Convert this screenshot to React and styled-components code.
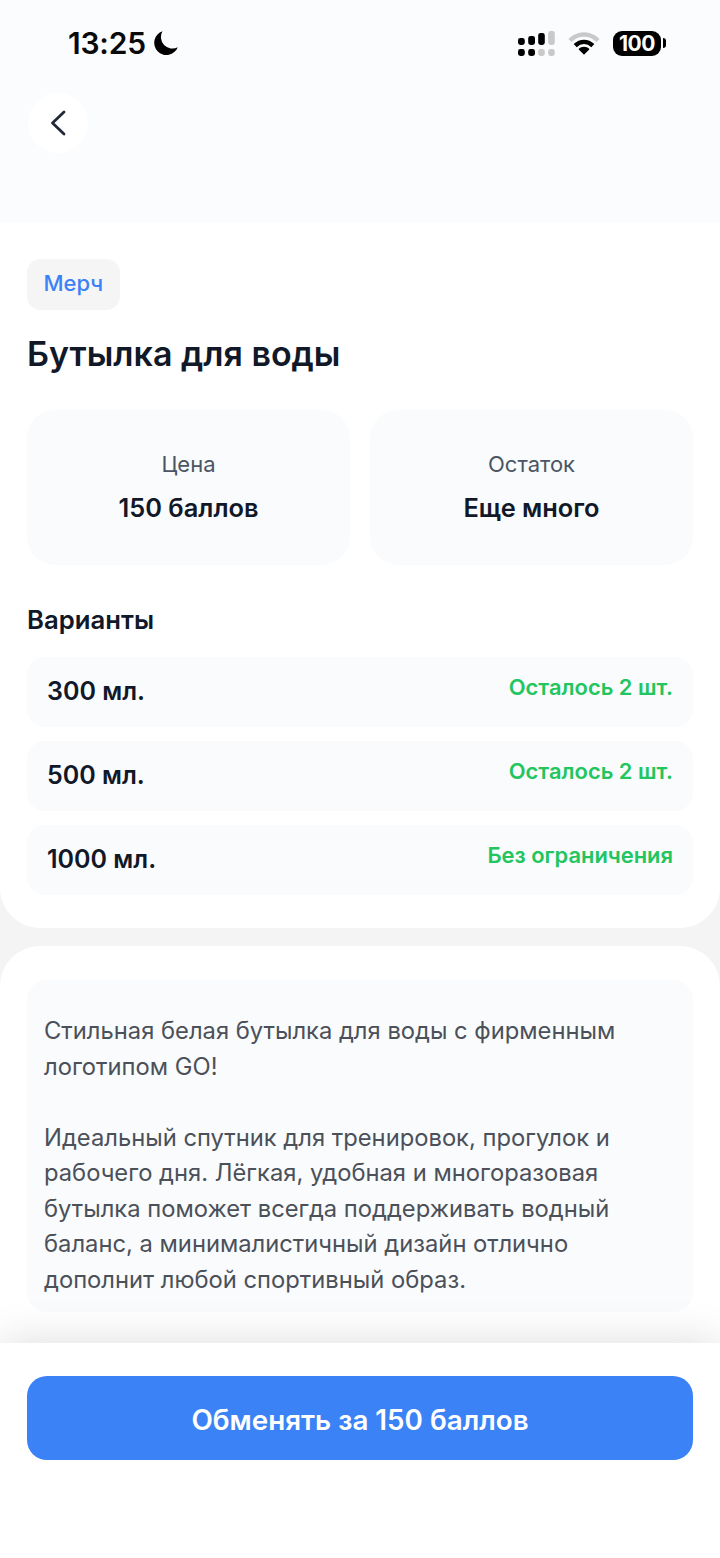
import React from "react";
import styled, { createGlobalStyle } from "styled-components";

const GlobalStyle = createGlobalStyle`
  html, body {
    margin: 0;
    padding: 0;
    background: #f4f4f5;
  }
  * {
    box-sizing: border-box;
  }
`;

const Page = styled.div`
  position: relative;
  width: 720px;
  height: 1558px;
  overflow: hidden;
  background: #f4f4f5;
  font-family: Inter, "Noto Sans", sans-serif;
  color: #111827;
`;

const Hero = styled.header`
  height: 223px;
  background: #fbfcfe;
  padding: 0 28px;
`;

const StatusBar = styled.div`
  height: 86px;
  display: flex;
  align-items: center;
  justify-content: space-between;
  padding: 0 26px 0 40px;
`;

const Clock = styled.div`
  display: flex;
  align-items: center;
  gap: 7px;
  font-size: 30px;
  font-weight: 600;
  letter-spacing: -0.2px;
  color: #0a0a0a;
`;

const StatusIcons = styled.div`
  display: flex;
  align-items: center;
  gap: 13px;
`;

const BatteryBox = styled.div`
  display: flex;
  align-items: center;
  gap: 2px;
`;

const BatteryBody = styled.div`
  width: 48px;
  height: 25px;
  border-radius: 9px;
  background: #000;
  color: #fff;
  font-size: 21px;
  font-weight: 700;
  line-height: 25px;
  text-align: center;
  letter-spacing: -0.5px;
`;

const BatteryTip = styled.div`
  width: 3px;
  height: 10px;
  border-radius: 0 3px 3px 0;
  background: #000;
`;

const BackButton = styled.button`
  width: 60px;
  height: 60px;
  margin-top: 7px;
  padding: 0;
  border: none;
  border-radius: 50%;
  background: #fff;
  display: flex;
  align-items: center;
  justify-content: center;
`;

const MainCard = styled.section`
  height: 705px;
  background: #fff;
  border-radius: 0 0 40px 40px;
  padding: 36px 27px 0;
`;

const Tag = styled.div`
  display: inline-flex;
  align-items: center;
  height: 51px;
  padding: 0 16.5px 3px;
  border-radius: 14px;
  background: #f5f5f6;
  color: #3b82f6;
  font-size: 22px;
  font-weight: 500;
`;

const Title = styled.h1`
  margin: 20px 0 0;
  font-size: 34px;
  line-height: 48px;
  font-weight: 600;
  color: #111827;
`;

const Stats = styled.div`
  display: grid;
  grid-template-columns: 1fr 1fr;
  gap: 20px;
  margin-top: 32px;
`;

const StatCard = styled.div`
  height: 155px;
  border-radius: 28px;
  background: #f9fbfd;
  display: flex;
  flex-direction: column;
  align-items: center;
  padding-top: 40px;
`;

const StatLabel = styled.div`
  font-size: 22px;
  line-height: 28px;
  color: #4b5563;
`;

const StatValue = styled.div`
  margin-top: 14px;
  font-size: 25.4px;
  line-height: 32px;
  font-weight: 570;
  color: #111827;
`;

const SectionTitle = styled.h2`
  margin: 39px 0 0;
  font-size: 25.7px;
  line-height: 32px;
  font-weight: 570;
  color: #111827;
`;

const Variants = styled.div`
  display: flex;
  flex-direction: column;
  gap: 14px;
  margin-top: 21px;
`;

const VariantRow = styled.div`
  height: 70px;
  border-radius: 18px;
  background: #f9fbfd;
  display: flex;
  justify-content: space-between;
  padding: 0 20px;
`;

const VariantName = styled.div`
  font-size: 25px;
  line-height: 68px;
  font-weight: 570;
  color: #111827;
`;

const VariantStock = styled.div`
  padding-top: 14px;
  font-size: 21.9px;
  line-height: 32px;
  font-weight: 580;
  color: #22c55e;
`;

const DescriptionCard = styled.section`
  height: 700px;
  margin-top: 18px;
  background: #fff;
  border-radius: 40px 40px 0 0;
  padding: 34px 27px 0;
`;

const DescriptionBox = styled.div`
  height: 332px;
  border-radius: 20px;
  background: #f9fbfd;
  padding: 33px 17px 0;
`;

const Paragraph = styled.p`
  margin: 0 0 35.5px;
  font-size: 23.75px;
  line-height: 35.5px;
  color: #4b5059;
`;

const Footer = styled.footer`
  position: absolute;
  left: 0;
  right: 0;
  bottom: 0;
  height: 215px;
  padding: 33px 27px 0;
  background: #fff;
  box-shadow: 0 -2px 40px rgba(0, 0, 0, 0.13);
`;

const SubmitButton = styled.button`
  width: 100%;
  height: 84px;
  border: none;
  border-radius: 20px;
  padding: 3px 0 0;
  background: #3b82f6;
  color: #fff;
  font-family: inherit;
  font-size: 27.8px;
  font-weight: 560;
`;

function MoonIcon() {
  return (
    <svg width="26" height="26" viewBox="0 0 26 26" fill="#000">
      <path d="M9.5 1.2A12.2 12.2 0 1 0 24.8 17.2 11.5 11.5 0 0 1 9.5 1.2Z" />
    </svg>
  );
}

function SignalIcon() {
  return (
    <svg width="37" height="25" viewBox="0 0 37 25">
      <rect x="0" y="7" width="6.8" height="7" rx="2.4" fill="#000" />
      <rect x="10.2" y="5" width="6.8" height="9" rx="2.4" fill="#000" />
      <rect x="20.2" y="2" width="6.6" height="12" rx="2.4" fill="#000" />
      <rect x="30.2" y="0" width="6.6" height="14" rx="2.4" fill="#c9c9c9" />
      <rect x="0" y="18" width="6.8" height="7" rx="2.4" fill="#000" />
      <rect x="10.2" y="18" width="6.8" height="7" rx="2.4" fill="#000" />
      <rect x="20.2" y="18" width="6.6" height="7" rx="2.4" fill="#c9c9c9" />
      <rect x="30.2" y="18" width="6.6" height="7" rx="2.4" fill="#c9c9c9" />
    </svg>
  );
}

function WifiIcon() {
  return (
    <svg width="32" height="24" viewBox="0 0 32 24" fill="none" strokeWidth="4.4">
      <path d="M2 9.5C10 1.5 22 1.5 30 9.5" stroke="#c9c9c9" />
      <path d="M7.2 14.6C12.5 9.6 19.5 9.6 24.8 14.6" stroke="#000" />
      <path d="M10.5 18.2L16 23.8 21.5 18.2C18.5 15 13.5 15 10.5 18.2Z" fill="#000" strokeWidth="0" />
    </svg>
  );
}

function BackIcon() {
  return (
    <svg width="16" height="26" viewBox="0 0 16 26" fill="none">
      <path d="M14 2 2.5 13 14 24" stroke="#1f2937" strokeWidth="2.8" strokeLinecap="round" strokeLinejoin="round" />
    </svg>
  );
}

const variants = [
  { name: "300 мл.", stock: "Осталось 2 шт." },
  { name: "500 мл.", stock: "Осталось 2 шт." },
  { name: "1000 мл.", stock: "Без ограничения" },
];

export default function App() {
  return (
    <Page>
      <GlobalStyle />
      <Hero>
        <StatusBar>
          <Clock>
            13:25
            <MoonIcon />
          </Clock>
          <StatusIcons>
            <SignalIcon />
            <WifiIcon />
            <BatteryBox>
              <BatteryBody>100</BatteryBody>
              <BatteryTip />
            </BatteryBox>
          </StatusIcons>
        </StatusBar>
        <BackButton>
          <BackIcon />
        </BackButton>
      </Hero>
      <MainCard>
        <Tag>Мерч</Tag>
        <Title>Бутылка для воды</Title>
        <Stats>
          <StatCard>
            <StatLabel>Цена</StatLabel>
            <StatValue>150 баллов</StatValue>
          </StatCard>
          <StatCard>
            <StatLabel>Остаток</StatLabel>
            <StatValue>Еще много</StatValue>
          </StatCard>
        </Stats>
        <SectionTitle>Варианты</SectionTitle>
        <Variants>
          {variants.map((item) => (
            <VariantRow key={item.name}>
              <VariantName>{item.name}</VariantName>
              <VariantStock>{item.stock}</VariantStock>
            </VariantRow>
          ))}
        </Variants>
      </MainCard>
      <DescriptionCard>
        <DescriptionBox>
          <Paragraph>
            Стильная белая бутылка для воды с фирменным
            <br />
            логотипом GO!
          </Paragraph>
          <Paragraph>
            Идеальный спутник для тренировок, прогулок и
            <br />
            рабочего дня. Лёгкая, удобная и многоразовая
            <br />
            бутылка поможет всегда поддерживать водный
            <br />
            баланс, а минималистичный дизайн отлично
            <br />
            дополнит любой спортивный образ.
          </Paragraph>
        </DescriptionBox>
      </DescriptionCard>
      <Footer>
        <SubmitButton>Обменять за 150 баллов</SubmitButton>
      </Footer>
    </Page>
  );
}
